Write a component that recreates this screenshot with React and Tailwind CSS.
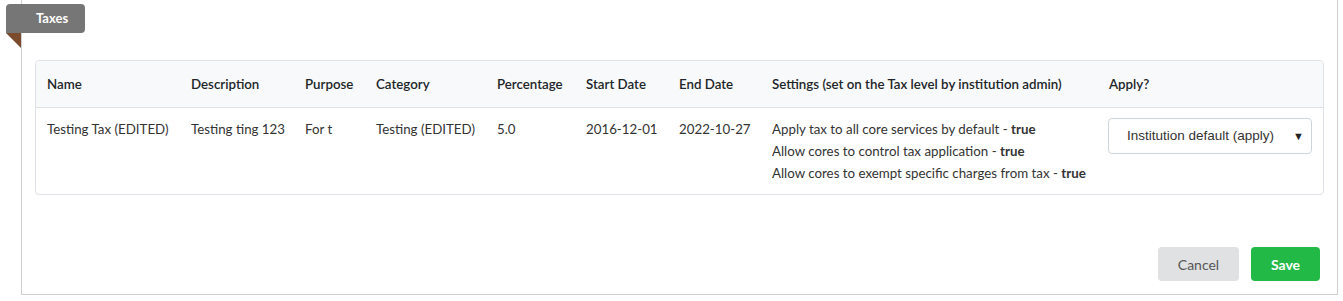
import React from 'react';

const columns = [
  { label: 'Name', width: 'w-[144px]' },
  { label: 'Description', width: 'w-[114px]' },
  { label: 'Purpose', width: 'w-[71px]' },
  { label: 'Category', width: 'w-[121px]' },
  { label: 'Percentage', width: 'w-[89px]' },
  { label: 'Start Date', width: 'w-[93px]' },
  { label: 'End Date', width: 'w-[93px]' },
  { label: 'Settings (set on the Tax level by institution admin)', width: 'w-[337px]' },
  { label: 'Apply?', width: 'w-[225px]' },
];

const tax = {
  name: 'Testing Tax (EDITED)',
  description: 'Testing ting 123',
  purpose: 'For t',
  category: 'Testing (EDITED)',
  percentage: '5.0',
  startDate: '2016-12-01',
  endDate: '2022-10-27',
  settings: [
    'Apply tax to all core services by default',
    'Allow cores to control tax application',
    'Allow cores to exempt specific charges from tax',
  ],
};

const App = () => {
  return (
    <div className="bg-white h-[301px] font-['Lato','Open_Sans',sans-serif] text-[13.3px] text-[#333]">
      <div className="ml-[21px] mr-[5px] border-x border-b border-[#d0d0d0] pt-[4px] px-[13px] pb-[13px]">
        {/* ribbon tab */}
        <div className="-ml-[29px] w-[79px]">
          <div className="h-[29px] bg-[#767676] rounded-[4px] rounded-bl-none pl-[30px] flex items-center text-white font-bold text-[13px]">
            Taxes
          </div>
          <div className="w-0 h-0 border-t-[15px] border-l-[15px] border-t-[#7a4b2c] border-l-transparent" />
        </div>

        <div className="mt-[12px] border border-[#dee2e6] rounded-[4px] overflow-hidden">
          <table className="w-full table-fixed border-collapse">
            <thead>
              <tr className="bg-[#f8f9fa] border-b border-[#dee2e6]">
                {columns.map((col) => (
                  <th
                    key={col.label}
                    className={`${col.width} text-left font-semibold text-[#212529] px-[11px] py-[12px] leading-[22px] whitespace-nowrap`}
                  >
                    {col.label}
                  </th>
                ))}
              </tr>
            </thead>
            <tbody>
              <tr className="align-top leading-[22px]">
                <td className="px-[11px] pt-[10px] pb-[10px] whitespace-nowrap">{tax.name}</td>
                <td className="px-[11px] pt-[10px] whitespace-nowrap">{tax.description}</td>
                <td className="px-[11px] pt-[10px] whitespace-nowrap">{tax.purpose}</td>
                <td className="px-[11px] pt-[10px] whitespace-nowrap">{tax.category}</td>
                <td className="px-[11px] pt-[10px] whitespace-nowrap">{tax.percentage}</td>
                <td className="px-[11px] pt-[10px] whitespace-nowrap">{tax.startDate}</td>
                <td className="px-[11px] pt-[10px] whitespace-nowrap">{tax.endDate}</td>
                <td className="px-[11px] pt-[10px] pb-[10px] whitespace-nowrap">
                  {tax.settings.map((s) => (
                    <div key={s}>
                      {s} - <span className="font-bold">true</span>
                    </div>
                  ))}
                </td>
                <td className="pl-[10px] pr-[11px] pt-[10px]">
                  <div className="h-[36px] w-[204px] border border-[#ced4da] rounded-[4px] bg-white flex items-center pl-[18px] pr-[7px] font-['Liberation_Sans',Arial,sans-serif] text-[13.5px] text-[#333]">
                    <span>Institution default (apply)</span>
                    <span className="ml-auto text-[11px] text-[#222]">▼</span>
                  </div>
                </td>
              </tr>
            </tbody>
          </table>
        </div>

        <div className="mt-[52px] flex justify-end gap-[12px] pr-[4px]">
          <button className="h-[34px] w-[81px] rounded-[4px] bg-[#e0e1e3] text-[#555] text-[14px]">
            Cancel
          </button>
          <button className="h-[34px] w-[69px] rounded-[4px] bg-[#22b946] text-white font-bold text-[14px]">
            Save
          </button>
        </div>
      </div>
    </div>
  );
};

export default App;
